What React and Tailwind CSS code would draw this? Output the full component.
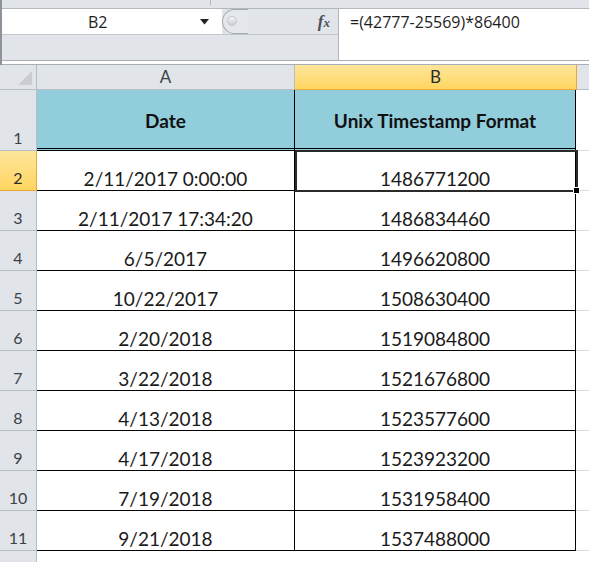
import React from "react";

const rows = [
  ["2", "2/11/2017 0:00:00", "1486771200"],
  ["3", "2/11/2017 17:34:20", "1486834460"],
  ["4", "6/5/2017", "1496620800"],
  ["5", "10/22/2017", "1508630400"],
  ["6", "2/20/2018", "1519084800"],
  ["7", "3/22/2018", "1521676800"],
  ["8", "4/13/2018", "1523577600"],
  ["9", "4/17/2018", "1523923200"],
  ["10", "7/19/2018", "1531958400"],
  ["11", "9/21/2018", "1537488000"],
];

const RowHead = ({ n, active }) => (
  <div
    className={
      "w-[37px] shrink-0 flex items-end justify-center pb-[2px] border-r border-b text-[16px] leading-none " +
      (active
        ? "bg-gradient-to-b from-[#fde69a] to-[#ffd55f] border-[#e9a93a] text-[#2d2d2d]"
        : "bg-[#e1e4e9] border-[#b8bdc4] text-[#3c4048]")
    }
  >
    <span className="pb-[2px]">{n}</span>
  </div>
);

export default function App() {
  return (
    <div className="relative w-[589px] h-[562px] overflow-hidden bg-white font-['Lato',sans-serif]">
      {/* formula bar area */}
      <div className="border-l-2 border-[#8d939b] bg-[#e1e4e9]">
        <div className="relative h-[9px] border-b border-[#b3b8bf]">
          <div className="absolute left-[208px] top-0 h-[5px] w-px bg-[#b3b8bf]" />
        </div>
        <div className="flex h-[51px]">
          <div className="w-[336px] shrink-0 flex flex-col">
            <div className="flex h-[26px] border-b border-[#c3c7cd]">
              <div className="w-[220px] shrink-0 bg-white flex items-center font-['Open_Sans',sans-serif] text-[16px] text-[#1e1e1e]">
                <span className="ml-[86px]">B2</span>
                <svg className="ml-auto mr-[13px]" width="9" height="6" viewBox="0 0 9 6">
                  <path d="M0 0 H9 L4.5 5.5 Z" fill="#222" />
                </svg>
              </div>
              <div className="w-[18px] shrink-0 relative">
                <div className="absolute left-0 top-[0px] h-[25px] w-[26px] rounded-l-full border border-r-0 border-[#a4a9b0] bg-[#e4e7eb]" />
                <div className="absolute left-[5px] top-[7px] h-[10px] w-[10px] rounded-full bg-gradient-to-b from-[#f4f5f7] to-[#c9cdd2] border border-[#c4c8cd]" />
              </div>
              <div className="flex-1 flex items-center justify-end pr-[8px]">
                <span className="font-['Liberation_Serif',serif] italic font-bold text-[17px] text-[#4d5057] leading-none">
                  f<span className="text-[13px]">x</span>
                </span>
              </div>
            </div>
            <div className="flex-1" />
          </div>
          <div className="flex-1 bg-white border-l border-[#b3b8bf] pl-[11px] pt-[3px] font-['Open_Sans',sans-serif] text-[16px] text-[#1e1e1e] leading-[20px]">
            =(42777-25569)*86400
          </div>
        </div>
        <div className="h-[5px] bg-white border-t border-b border-[#a9aeb5]" />
      </div>

      {/* column headers */}
      <div className="flex h-[25px] text-[17px] text-[#3c4048]">
        <div className="w-[37px] shrink-0 bg-[#e1e4e9] border-r border-b border-[#b8bdc4] relative">
          <svg className="absolute right-[4px] bottom-[4px]" width="14" height="14" viewBox="0 0 14 14">
            <path d="M14 0 V14 H0 Z" fill="#c9cdd2" />
          </svg>
        </div>
        <div className="w-[258px] shrink-0 bg-[#e1e4e9] border-r border-b border-[#b8bdc4] flex items-center justify-center">
          A
        </div>
        <div className="w-[282px] shrink-0 bg-gradient-to-b from-[#fde69a] to-[#ffd55f] border-r border-b border-[#e9a93a] flex items-center justify-center text-[#2d2d2d]">
          B
        </div>
        <div className="flex-1 bg-[#e1e4e9] border-b border-[#b8bdc4]" />
      </div>

      {/* row 1 */}
      <div className="flex h-[61px]">
        <RowHead n="1" />
        <div className="w-[258px] shrink-0 bg-[#92cddc] border-r border-black border-b-[3px] border-b-black border-double flex items-center justify-center pt-[5px] font-bold text-[19px] text-[#111]">
          Date
        </div>
        <div className="w-[281px] shrink-0 bg-[#92cddc] border-r border-black border-b-[3px] border-b-black border-double flex items-center justify-center pt-[5px] font-bold text-[19px] text-[#111]">
          Unix Timestamp Format
        </div>
        <div className="flex-1 border-b border-[#d9d9d9]" />
      </div>

      {rows.map(([n, date, ts]) => (
        <div key={n} className="flex h-[40px]">
          <RowHead n={n} active={n === "2"} />
          <div className="w-[258px] shrink-0 border-r border-b border-black flex items-end justify-center pb-[2px] text-[19px] leading-none text-[#1a1a1a]">
            {date}
          </div>
          <div className="w-[281px] shrink-0 border-r border-b border-black flex items-end justify-center pb-[2px] text-[19px] leading-none text-[#1a1a1a]">
            {ts}
          </div>
          <div className="flex-1 border-b border-[#d9d9d9]" />
        </div>
      ))}

      <div className="flex h-[40px]">
        <RowHead n="12" />
        <div className="flex-1" />
      </div>

      {/* selection on B2 */}
      <div className="absolute left-[295px] top-[150px] w-[283px] h-[42px] border-2 border-[#2a2a2a] pointer-events-none" />
      <div className="absolute left-[573px] top-[187px] w-[7px] h-[7px] bg-black border border-white pointer-events-none" />
    </div>
  );
}
